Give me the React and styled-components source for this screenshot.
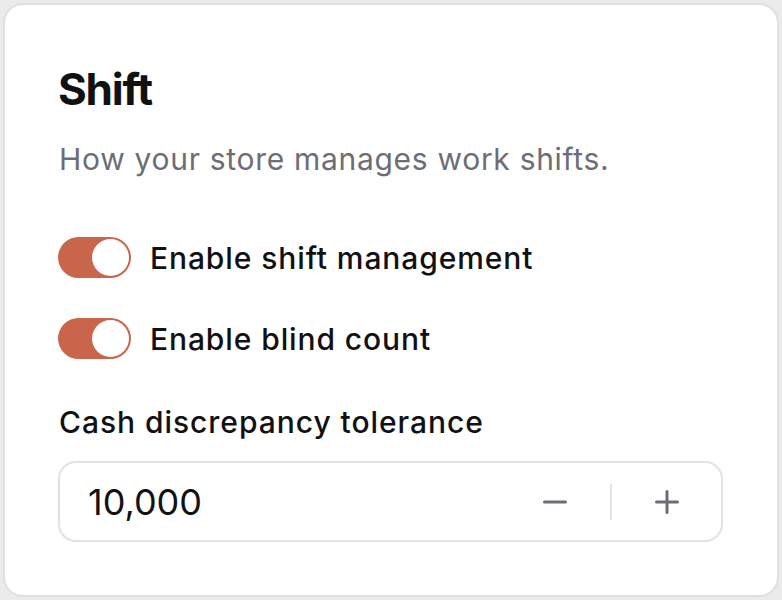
import React, { useState } from 'react';
import styled, { createGlobalStyle } from 'styled-components';

const GlobalStyle = createGlobalStyle`
    html, body {
        margin: 0;
        padding: 0;
        background: #ebebeb;
        font-family: Inter, "Noto Sans", sans-serif;
        -webkit-font-smoothing: antialiased;
    }
    #root {
        padding: 3px;
    }
`;

const Card = styled.section`
    box-sizing: border-box;
    height: 594px;
    background: #ffffff;
    border: 2px solid #e0e0e0;
    border-radius: 20px;
    padding: 58px 54px 0 53px;
    display: flex;
    flex-direction: column;
`;

const Title = styled.h2`
    margin: 0;
    font-size: 44px;
    line-height: 52px;
    font-weight: 700;
    color: #111111;
    letter-spacing: -1.2px;
`;

const Description = styled.p`
    margin: 24px 0 0 1px;
    font-size: 30px;
    line-height: 40px;
    letter-spacing: 0.7px;
    color: #6d6d75;
`;

const ToggleList = styled.div`
    display: flex;
    flex-direction: column;
    gap: 39px;
    margin-top: 57px;
`;

const ToggleRow = styled.label`
    display: flex;
    align-items: center;
    gap: 19px;
    cursor: pointer;
`;

const Track = styled.span`
    position: relative;
    flex: none;
    width: 73px;
    height: 41px;
    border-radius: 21px;
    background: ${({ $on }) => ($on ? '#c8654a' : '#d9d9de')};
    transition: background 0.2s;
`;

const Thumb = styled.span`
    position: absolute;
    top: 2px;
    left: ${({ $on }) => ($on ? '34px' : '2px')};
    width: 37px;
    height: 37px;
    border-radius: 50%;
    background: #ffffff;
    transition: left 0.2s;
`;

const ToggleText = styled.span`
    font-size: 30px;
    line-height: 40px;
    padding-top: 2px;
    font-weight: 500;
    letter-spacing: 0.9px;
    color: #111111;
`;

const FieldLabel = styled.div`
    margin-top: 43px;
    margin-left: 1px;
    font-size: 30px;
    line-height: 40px;
    font-weight: 500;
    letter-spacing: 0.95px;
    color: #111111;
`;

const Stepper = styled.div`
    box-sizing: border-box;
    margin-top: 19px;
    height: 81px;
    border: 2px solid #e2e2e2;
    border-radius: 18px;
    display: flex;
    align-items: center;
`;

const Value = styled.div`
    flex: 1;
    padding-left: 28px;
    font-size: 36px;
    color: #111111;
`;

const StepButton = styled.button`
    flex: none;
    width: ${({ $width }) => $width}px;
    height: 100%;
    border: none;
    background: none;
    padding: 0;
    display: flex;
    align-items: center;
    justify-content: center;
    color: #6c6c76;
    cursor: pointer;
`;

const Divider = styled.span`
    flex: none;
    width: 2px;
    height: 36px;
    background: #e3e3e3;
`;

const Toggle = ({ label, on, onChange }) => (
    <ToggleRow onClick={() => onChange(!on)}>
        <Track $on={on}>
            <Thumb $on={on} />
        </Track>
        <ToggleText>{label}</ToggleText>
    </ToggleRow>
);

// 24px glyphs drawn edge to edge so they keep a 3px stroke
const MinusIcon = () => (
    <svg width="26" height="26" viewBox="0 0 26 26" fill="none" stroke="currentColor" strokeWidth="3" strokeLinecap="round">
        <path d="M2.5 13h21" />
    </svg>
);

const PlusIcon = () => (
    <svg width="26" height="26" viewBox="0 0 26 26" fill="none" stroke="currentColor" strokeWidth="3" strokeLinecap="round">
        <path d="M2.5 13h21M13 2.5v21" />
    </svg>
);

const formatAmount = (n) => n.toLocaleString('en-US');

const App = () => {
    const [shifts, setShifts] = useState(true);
    const [blindCount, setBlindCount] = useState(true);
    const [tolerance, setTolerance] = useState(10000);

    return (
        <>
            <GlobalStyle />
            <Card>
                <Title>Shift</Title>
                <Description>How your store manages work shifts.</Description>
                <ToggleList>
                    <Toggle label="Enable shift management" on={shifts} onChange={setShifts} />
                    <Toggle label="Enable blind count" on={blindCount} onChange={setBlindCount} />
                </ToggleList>
                <FieldLabel>Cash discrepancy tolerance</FieldLabel>
                <Stepper>
                    <Value>{formatAmount(tolerance)}</Value>
                    <StepButton type="button" $width={110} onClick={() => setTolerance((t) => Math.max(0, t - 1000))}>
                        <MinusIcon />
                    </StepButton>
                    <Divider />
                    <StepButton type="button" $width={109} onClick={() => setTolerance((t) => t + 1000)}>
                        <PlusIcon />
                    </StepButton>
                </Stepper>
            </Card>
        </>
    );
};

export default App;
